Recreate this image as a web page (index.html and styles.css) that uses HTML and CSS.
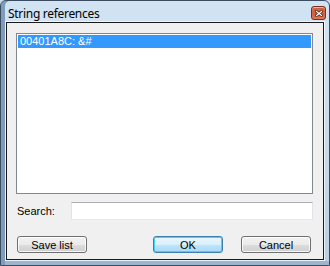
FILE: index.html
```html
<!DOCTYPE html>
<html lang="en">

<head>
    <meta charset="UTF-8" />
    <title>String references</title>
    <link rel="stylesheet" href="styles.css">
</head>

<body>
    <div class="window">
        <div class="titlebar">
            <span class="title">String references</span>
            <div class="close-btn" aria-label="Close">
                <svg width="8" height="7" viewBox="0 0 8 7">
                    <path d="M1.5 1.5 L6.5 5.5 M6.5 1.5 L1.5 5.5" stroke="#40190e" stroke-width="2.6" stroke-linecap="square" />
                    <path d="M1.5 1.5 L6.5 5.5 M6.5 1.5 L1.5 5.5" stroke="#ffffff" stroke-width="1.3" stroke-linecap="square" />
                </svg>
            </div>
        </div>
        <div class="client">
            <div class="listbox">
                <div class="item selected">00401A8C: &amp;#</div>
            </div>
            <div class="search-row">
                <label for="search">Search:</label>
                <input type="text" id="search" />
            </div>
            <div class="buttons">
                <button class="button">Save list</button>
                <div class="spacer"></div>
                <button class="button default">OK</button>
                <button class="button">Cancel</button>
            </div>
        </div>
    </div>
</body>

</html>
```

FILE: styles.css
```css
* {
    margin: 0;
    padding: 0;
    box-sizing: border-box;
}

body {
    background: #c8dbee;
    font-family: "Liberation Sans", Arial, sans-serif;
    font-size: 11px;
}

/**
* Window frame
*/
.window {
    width: 330px;
    height: 266px;
    display: flex;
    flex-direction: column;
    border: 1px solid #3b4c60;
    border-radius: 6px 6px 0 0;
    padding: 0 5px 5px 5px;
    background: linear-gradient(to bottom, #d2e3f3 0%, #c6d9ec 60%, #b9cfe4 100%);
    box-shadow: inset 4px 0 0 #7f9dbb, inset 0 -4px 0 #9db6cf;
}

.titlebar {
    height: 21px;
    display: flex;
    align-items: center;
    justify-content: space-between;
    padding-left: 2px;
}

.title {
    font-family: "Noto Sans", sans-serif;
    font-size: 12px;
    letter-spacing: -0.3px;
    color: #000;
    padding-top: 3px;
}

.close-btn {
    width: 15px;
    height: 14px;
    margin-top: 3px;
    margin-right: -2px;
    display: flex;
    align-items: center;
    justify-content: center;
    border: 1px solid #6a3526;
    border-radius: 3px;
    background: #d4603f;
    box-shadow: inset 0 1px 0 #f0b09a, inset 0 -2px 2px #e07a55;
}

.client {
    flex: 1;
    display: flex;
    flex-direction: column;
    border: 1px solid #1a1a1a;
    background: #f0f0f0;
    padding: 10px 10px 6px 9px;
    box-shadow: 0 0 0 1px rgba(255, 255, 255, 0.7);
}

/**
* Controls
*/
.listbox {
    height: 161px;
    border: 1px solid #828790;
    background: #fff;
    padding: 1px;
}

.item {
    height: 13px;
    line-height: 13px;
    padding-left: 2px;
}

.selected {
    background: #3399ff;
    color: #fff;
}

.search-row {
    display: flex;
    align-items: center;
    margin-top: 8px;
}

.search-row label {
    width: 55px;
    padding-left: 1px;
    color: #000;
}

.search-row input {
    flex: 1;
    height: 18px;
    border: 1px solid #e2e3ea;
    border-top-color: #abadb3;
    border-bottom-color: #e3e9ef;
    background: #fff;
}

.buttons {
    display: flex;
    margin-top: auto;
    gap: 18px;
    padding-left: 1px;
    padding-right: 2px;
}

.spacer {
    flex: 1;
}

.button {
    width: 70px;
    height: 17px;
    font-family: "Liberation Sans", Arial, sans-serif;
    font-size: 11px;
    color: #000;
    border: 1px solid #707070;
    border-radius: 3px;
    background: linear-gradient(to bottom, #f2f2f2 0%, #ebebeb 50%, #dddddd 51%, #cfcfcf 100%);
    box-shadow: inset 0 0 0 1px rgba(255, 255, 255, 0.8);
}

.default {
    border-color: #3c7fb1;
    background: linear-gradient(to bottom, #eaf6fd 0%, #d9f0fc 50%, #bee6fd 51%, #a7d9f5 100%);
    box-shadow: inset 0 0 0 1px #48d1fd;
}
```
